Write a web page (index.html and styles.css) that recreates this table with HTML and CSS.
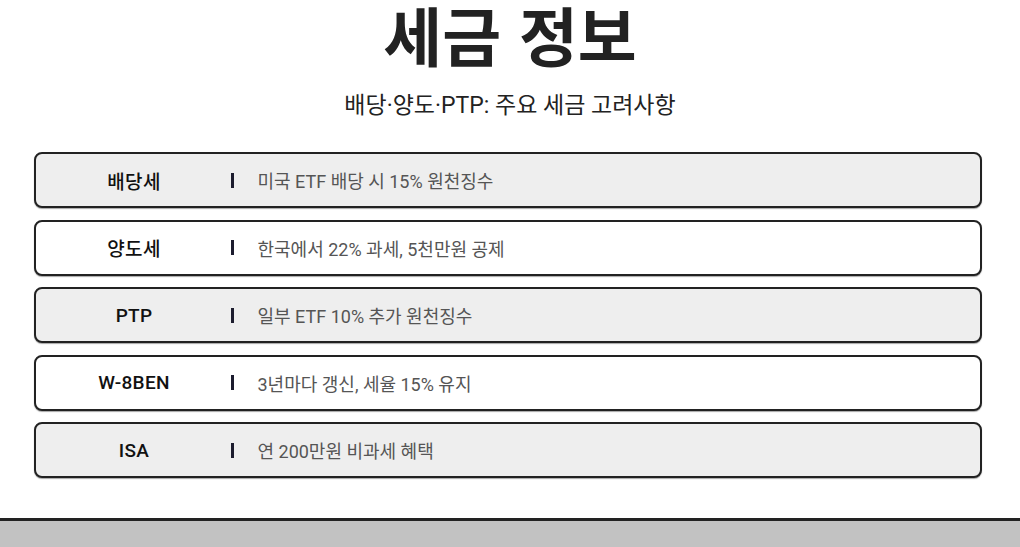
FILE: index.html
```html
<!DOCTYPE html>
<html lang="ko">
<head>
<meta charset="utf-8">
<link rel="stylesheet" href="styles.css">
</head>
<body>
<div class="page">
  <header class="head">
    <h1 class="title">세금 정보</h1>
    <p class="subtitle">배당·양도·PTP: 주요 세금 고려사항</p>
  </header>
  <ul class="list">
    <li class="row shade"><span class="label">배당세</span><span class="sep"></span><span class="desc">미국 ETF 배당 시 15% 원천징수</span></li>
    <li class="row"><span class="label">양도세</span><span class="sep"></span><span class="desc">한국에서 22% 과세, 5천만원 공제</span></li>
    <li class="row shade"><span class="label">PTP</span><span class="sep"></span><span class="desc">일부 ETF 10% 추가 원천징수</span></li>
    <li class="row"><span class="label">W-8BEN</span><span class="sep"></span><span class="desc">3년마다 갱신, 세율 15% 유지</span></li>
    <li class="row shade"><span class="label">ISA</span><span class="sep"></span><span class="desc">연 200만원 비과세 혜택</span></li>
  </ul>
</div>
<footer class="bar"></footer>
</body>
</html>
```
FILE: styles.css
```css
html, body {
  margin: 0;
  padding: 0;
  background: #ffffff;
  font-family: Roboto, "Noto Sans CJK KR", sans-serif;
  color: #222222;
}
.page {
  height: 518px;
  display: flex;
  flex-direction: column;
}
.head {
  display: flex;
  flex-direction: column;
  align-items: center;
}
.title {
  margin: 0;
  font-family: "Noto Sans CJK KR", sans-serif;
  font-size: 64px;
  font-weight: 700;
  line-height: 66px;
  color: #222222;
}
.subtitle {
  margin: 25px 0 0;
  font-size: 23px;
  line-height: 30px;
  color: #222222;
}
.list {
  list-style: none;
  margin: 31px 0 0 34px;
  padding: 0;
  width: 948px;
  display: flex;
  flex-direction: column;
  gap: 11.5px;
}
.row {
  box-sizing: border-box;
  height: 56px;
  border: 2px solid #222222;
  border-radius: 8px;
  background: #ffffff;
  box-shadow: 0 1px 1px rgba(0,0,0,0.35);
  display: flex;
  align-items: center;
}
.row.shade {
  background: #eeeeee;
}
.label {
  width: 196px;
  text-align: center;
  font-size: 19px;
  font-weight: 500;
  color: #111111;
  letter-spacing: 0.3px;
}
.sep {
  width: 2.5px;
  height: 15px;
  background: #1c1c2e;
  margin: 0 24px 0 -1px;
}
.desc {
  font-size: 18px;
  color: #555555;
}
.bar {
  height: 29px;
  border-top: 3px solid #222222;
  background: #c2c2c2;
}
```
